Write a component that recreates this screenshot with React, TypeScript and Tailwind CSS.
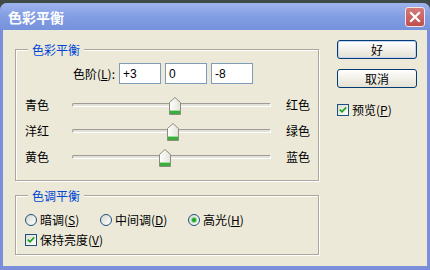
import React from "react"

const levels = [3, 0, -8]
const sliders = [
  { left: "青色", right: "红色", value: 3 },
  { left: "洋红", right: "绿色", value: 0 },
  { left: "黄色", right: "蓝色", value: -8 },
]

function CloseButton() {
  return (
    <div className="w-[20px] h-[20px] rounded-[3px] border border-[#f4e4e4] bg-gradient-to-b from-[#d37b7b] to-[#c04f50] flex items-center justify-center">
      <svg width="12" height="12" viewBox="0 0 12 12">
        <path d="M2 2 L10 10 M10 2 L2 10" stroke="#fff" strokeWidth="2.2" strokeLinecap="square" />
      </svg>
    </div>
  )
}

function Thumb({ value }: { value: number }) {
  const left = ((value + 100) / 200) * 199 - 6
  return (
    <svg width="12" height="18" viewBox="0 0 12 18" className="absolute top-[-7px]" style={{ left }}>
      <defs>
        <linearGradient id="thumbFill" x1="0" y1="0" x2="1" y2="0">
          <stop offset="0" stopColor="#ffffff" />
          <stop offset="1" stopColor="#e4e3da" />
        </linearGradient>
      </defs>
      <path d="M0.5 5.5 L6 0.5 L11.5 5.5 V17.5 H0.5 Z" fill="url(#thumbFill)" stroke="#8c8d82" />
      <rect x="1" y="13" width="10" height="1" fill="#9fdc9f" />
      <rect x="1" y="14" width="10" height="3" fill="#3aae3a" />
    </svg>
  )
}

function Track({ value }: { value: number }) {
  return (
    <div className="relative w-[199px] h-[4px] rounded-l-[2px] border border-[#9d9c96] border-r-white border-b-white bg-[#e3e2da]">
      <Thumb value={value} />
    </div>
  )
}

function CheckBox() {
  return (
    <span className="w-[12px] h-[12px] border border-[#1c5180] bg-gradient-to-br from-[#dcdcd4] to-white flex items-center justify-center">
      <svg width="8" height="8" viewBox="0 0 8 8">
        <path d="M0.8 3.6 L3 5.8 L7.2 1.4" stroke="#21a121" strokeWidth="1.8" fill="none" />
      </svg>
    </span>
  )
}

function Radio({ checked }: { checked?: boolean }) {
  return (
    <span className="w-[12px] h-[12px] rounded-full border border-[#1c5180] bg-gradient-to-br from-[#d8d8d0] to-white flex items-center justify-center">
      {checked && <span className="w-[4px] h-[4px] rounded-full bg-[#21a121] shadow-[0_0_0_1px_#8fd68f]" />}
    </span>
  )
}

function Group({ title, className, children }: { title: string; className: string; children: React.ReactNode }) {
  return (
    <div className={"relative border border-[#aca899] shadow-[inset_1px_1px_0_#fff,1px_1px_0_#fff] " + className}>
      <span className="absolute left-[12px] top-[-7px] px-[4px] bg-[#ece9d8] text-[#0046d5] text-[12px] leading-[13px]">{title}</span>
      {children}
    </div>
  )
}

function XpButton({ label, isDefault }: { label: string; isDefault?: boolean }) {
  return (
    <div
      className={
        "w-[80px] h-[19px] rounded-[3px] border border-[#003c74] bg-gradient-to-b from-white to-[#e4e1d3] flex items-center justify-center text-[12px] leading-none " +
        (isDefault ? "shadow-[inset_0_0_0_1px_#c4d3f3]" : "")
      }
    >
      {label}
    </div>
  )
}

export default function App() {
  return (
    <div className="w-[430px] h-[270px] bg-[#3f4a46] pt-[3px] font-['Noto_Sans_CJK_SC',sans-serif] text-black">
      <div className="h-[267px] flex flex-col rounded-t-[7px] overflow-hidden bg-[#7b8ed9]">
        <div className="h-[27px] shrink-0 flex items-center justify-between pl-[8px] pr-[5px] bg-gradient-to-b from-[#9fb4ec] via-[#829de3] to-[#7592dc]">
          <span className="text-white font-bold text-[14px] leading-none">色彩平衡</span>
          <CloseButton />
        </div>
        <div className="flex-1 mx-[3px] mb-[4px] bg-[#ece9d8] flex text-[12px]">
          <div className="pl-[12px]">
            <Group title="色彩平衡" className="mt-[19px] w-[304px] h-[132px] pt-[13px]">
              <div className="flex items-center h-[21px]">
                <span className="w-[99px] text-right leading-none">
                  色阶(<u>L</u>):
                </span>
                <div className="flex gap-[4px] ml-[4px]">
                  {levels.map((v, i) => (
                    <div
                      key={i}
                      className="w-[42px] h-[21px] bg-white border border-[#7f9db9] pl-[3px] flex items-center font-['Liberation_Sans',sans-serif] text-[12px]"
                    >
                      {v > 0 ? "+" + v : v}
                    </div>
                  ))}
                </div>
              </div>
              <div className="mt-[8px]">
                {sliders.map((s) => (
                  <div key={s.left} className="flex items-center h-[26px] pl-[9px]">
                    <span className="w-[47px] leading-none">{s.left}</span>
                    <Track value={s.value} />
                    <span className="ml-[15px] leading-none">{s.right}</span>
                  </div>
                ))}
              </div>
            </Group>
            <Group title="色调平衡" className="mt-[14px] w-[304px] h-[60px] pt-[16px]">
              <div className="flex items-center h-[16px] pl-[9px]">
                <div className="w-[75px] flex items-center gap-[3px]">
                  <Radio />
                  <span className="leading-none">
                    暗调(<u>S</u>)
                  </span>
                </div>
                <div className="w-[88px] flex items-center gap-[3px]">
                  <Radio />
                  <span className="leading-none">
                    中间调(<u>D</u>)
                  </span>
                </div>
                <div className="flex items-center gap-[3px]">
                  <Radio checked />
                  <span className="leading-none">
                    高光(<u>H</u>)
                  </span>
                </div>
              </div>
              <div className="flex items-center h-[16px] mt-[4px] pl-[9px] gap-[3px]">
                <CheckBox />
                <span className="leading-none">
                  保持亮度(<u>V</u>)
                </span>
              </div>
            </Group>
          </div>
          <div className="ml-[18px] pt-[10px]">
            <XpButton label="好" isDefault />
            <div className="mt-[10px]">
              <XpButton label="取消" />
            </div>
            <div className="mt-[15px] h-[14px] flex items-center gap-[3px]">
              <CheckBox />
              <span className="leading-none">
                预览(<u>P</u>)
              </span>
            </div>
          </div>
        </div>
      </div>
    </div>
  )
}
